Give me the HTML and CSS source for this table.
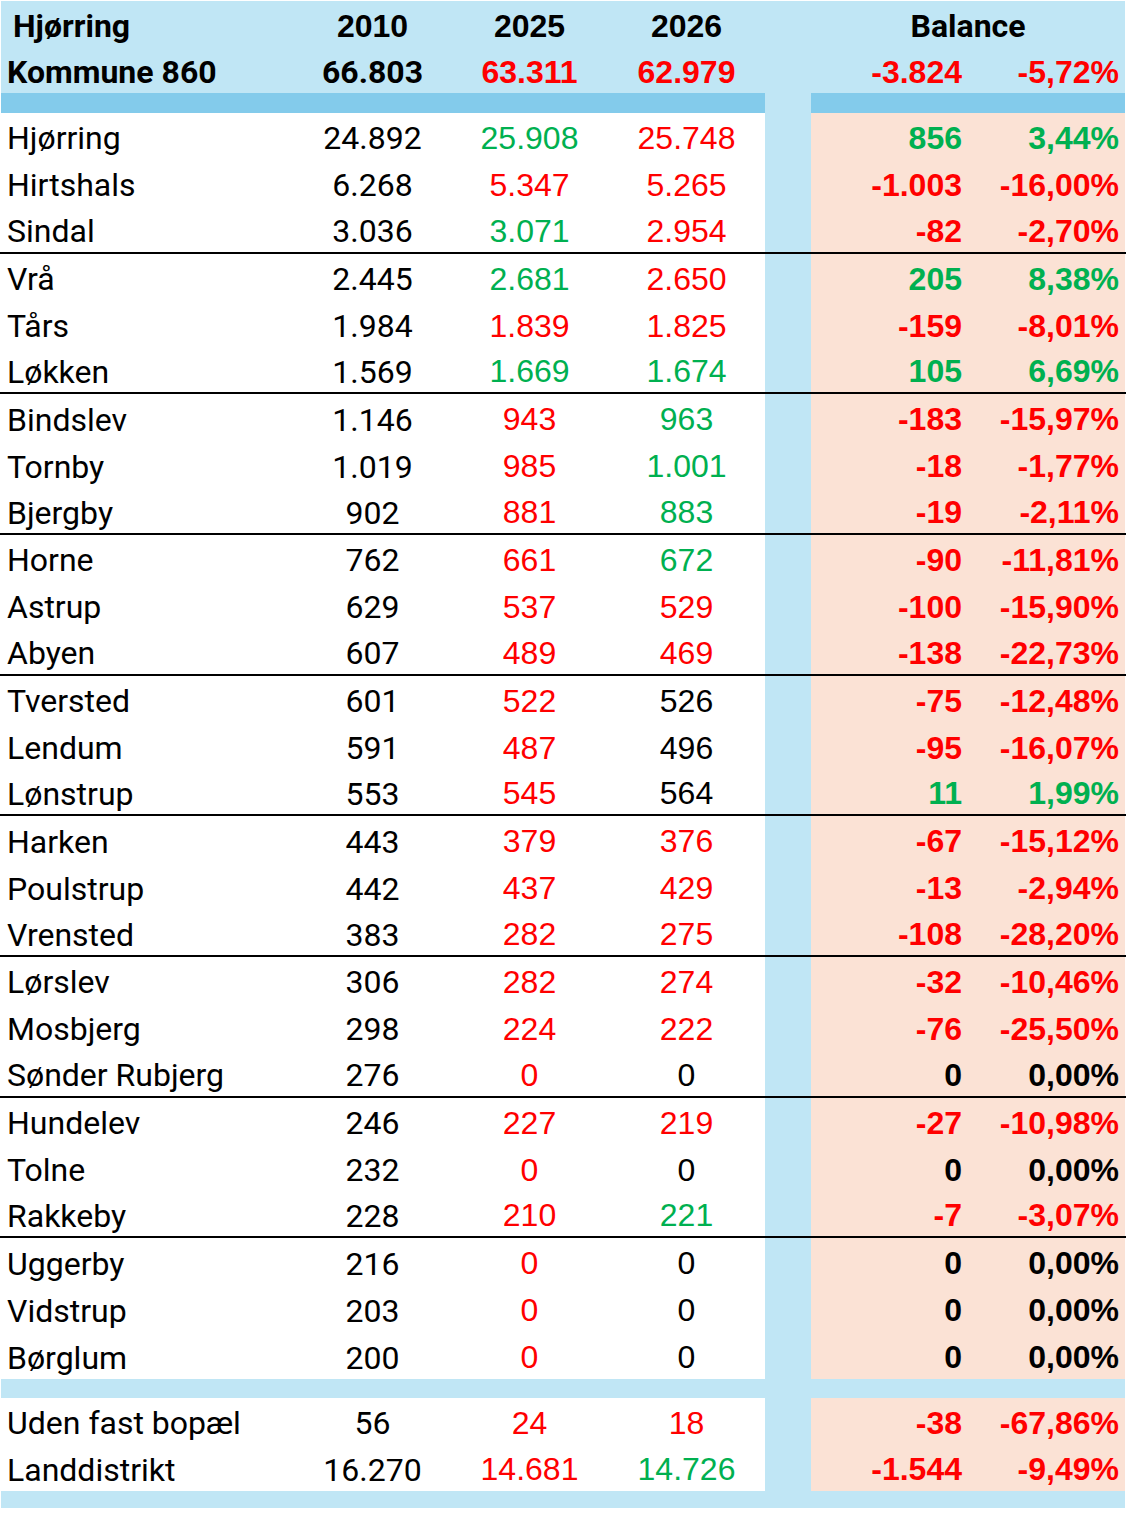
FILE: index.html
```html
<!DOCTYPE html>
<html lang="da">
<head>
<meta charset="utf-8">
<title>Hjørring Kommune 860</title>
<link rel="stylesheet" href="styles.css">
</head>
<body>
<div class="sheet">
  <div class="row head">
    <div class="cell n hb indent">Hjørring</div>
    <div class="cell a ab">2010</div>
    <div class="cell b ab">2025</div>
    <div class="cell c ab">2026</div>
    <div class="cell g"></div>
    <div class="cell bal hb">Balance</div>
  </div>
  <div class="row head">
    <div class="cell n hb">Kommune 860</div>
    <div class="cell a hb">66.803</div>
    <div class="cell b ab r">63.311</div>
    <div class="cell c ab r">62.979</div>
    <div class="cell g"></div>
    <div class="cell d r">-3.824</div>
    <div class="cell p r">-5,72%</div>
  </div>
  <div class="row strip">
    <div class="cell dk"></div><div class="cell dk"></div><div class="cell dk"></div><div class="cell dk"></div>
    <div class="cell g"></div>
    <div class="cell dk"></div><div class="cell dk"></div>
  </div>

  <div class="body">
    <div class="row"><div class="cell n">Hjørring</div><div class="cell a">24.892</div><div class="cell b gr">25.908</div><div class="cell c r">25.748</div><div class="cell g"></div><div class="cell d gr">856</div><div class="cell p gr">3,44%</div></div>
    <div class="row"><div class="cell n">Hirtshals</div><div class="cell a">6.268</div><div class="cell b r">5.347</div><div class="cell c r">5.265</div><div class="cell g"></div><div class="cell d r">-1.003</div><div class="cell p r">-16,00%</div></div>
    <div class="row sep"><div class="cell n">Sindal</div><div class="cell a">3.036</div><div class="cell b gr">3.071</div><div class="cell c r">2.954</div><div class="cell g"></div><div class="cell d r">-82</div><div class="cell p r">-2,70%</div></div>

    <div class="row"><div class="cell n">Vrå</div><div class="cell a">2.445</div><div class="cell b gr">2.681</div><div class="cell c r">2.650</div><div class="cell g"></div><div class="cell d gr">205</div><div class="cell p gr">8,38%</div></div>
    <div class="row"><div class="cell n">Tårs</div><div class="cell a">1.984</div><div class="cell b r">1.839</div><div class="cell c r">1.825</div><div class="cell g"></div><div class="cell d r">-159</div><div class="cell p r">-8,01%</div></div>
    <div class="row sep"><div class="cell n">Løkken</div><div class="cell a">1.569</div><div class="cell b gr">1.669</div><div class="cell c gr">1.674</div><div class="cell g"></div><div class="cell d gr">105</div><div class="cell p gr">6,69%</div></div>

    <div class="row"><div class="cell n">Bindslev</div><div class="cell a">1.146</div><div class="cell b r">943</div><div class="cell c gr">963</div><div class="cell g"></div><div class="cell d r">-183</div><div class="cell p r">-15,97%</div></div>
    <div class="row"><div class="cell n">Tornby</div><div class="cell a">1.019</div><div class="cell b r">985</div><div class="cell c gr">1.001</div><div class="cell g"></div><div class="cell d r">-18</div><div class="cell p r">-1,77%</div></div>
    <div class="row sep"><div class="cell n">Bjergby</div><div class="cell a">902</div><div class="cell b r">881</div><div class="cell c gr">883</div><div class="cell g"></div><div class="cell d r">-19</div><div class="cell p r">-2,11%</div></div>

    <div class="row"><div class="cell n">Horne</div><div class="cell a">762</div><div class="cell b r">661</div><div class="cell c gr">672</div><div class="cell g"></div><div class="cell d r">-90</div><div class="cell p r">-11,81%</div></div>
    <div class="row"><div class="cell n">Astrup</div><div class="cell a">629</div><div class="cell b r">537</div><div class="cell c r">529</div><div class="cell g"></div><div class="cell d r">-100</div><div class="cell p r">-15,90%</div></div>
    <div class="row sep"><div class="cell n">Abyen</div><div class="cell a">607</div><div class="cell b r">489</div><div class="cell c r">469</div><div class="cell g"></div><div class="cell d r">-138</div><div class="cell p r">-22,73%</div></div>

    <div class="row"><div class="cell n">Tversted</div><div class="cell a">601</div><div class="cell b r">522</div><div class="cell c">526</div><div class="cell g"></div><div class="cell d r">-75</div><div class="cell p r">-12,48%</div></div>
    <div class="row"><div class="cell n">Lendum</div><div class="cell a">591</div><div class="cell b r">487</div><div class="cell c">496</div><div class="cell g"></div><div class="cell d r">-95</div><div class="cell p r">-16,07%</div></div>
    <div class="row sep"><div class="cell n">Lønstrup</div><div class="cell a">553</div><div class="cell b r">545</div><div class="cell c">564</div><div class="cell g"></div><div class="cell d gr">11</div><div class="cell p gr">1,99%</div></div>

    <div class="row"><div class="cell n">Harken</div><div class="cell a">443</div><div class="cell b r">379</div><div class="cell c r">376</div><div class="cell g"></div><div class="cell d r">-67</div><div class="cell p r">-15,12%</div></div>
    <div class="row"><div class="cell n">Poulstrup</div><div class="cell a">442</div><div class="cell b r">437</div><div class="cell c r">429</div><div class="cell g"></div><div class="cell d r">-13</div><div class="cell p r">-2,94%</div></div>
    <div class="row sep"><div class="cell n">Vrensted</div><div class="cell a">383</div><div class="cell b r">282</div><div class="cell c r">275</div><div class="cell g"></div><div class="cell d r">-108</div><div class="cell p r">-28,20%</div></div>

    <div class="row"><div class="cell n">Lørslev</div><div class="cell a">306</div><div class="cell b r">282</div><div class="cell c r">274</div><div class="cell g"></div><div class="cell d r">-32</div><div class="cell p r">-10,46%</div></div>
    <div class="row"><div class="cell n">Mosbjerg</div><div class="cell a">298</div><div class="cell b r">224</div><div class="cell c r">222</div><div class="cell g"></div><div class="cell d r">-76</div><div class="cell p r">-25,50%</div></div>
    <div class="row sep"><div class="cell n">Sønder Rubjerg</div><div class="cell a">276</div><div class="cell b r">0</div><div class="cell c">0</div><div class="cell g"></div><div class="cell d">0</div><div class="cell p">0,00%</div></div>

    <div class="row"><div class="cell n">Hundelev</div><div class="cell a">246</div><div class="cell b r">227</div><div class="cell c r">219</div><div class="cell g"></div><div class="cell d r">-27</div><div class="cell p r">-10,98%</div></div>
    <div class="row"><div class="cell n">Tolne</div><div class="cell a">232</div><div class="cell b r">0</div><div class="cell c">0</div><div class="cell g"></div><div class="cell d">0</div><div class="cell p">0,00%</div></div>
    <div class="row sep"><div class="cell n">Rakkeby</div><div class="cell a">228</div><div class="cell b r">210</div><div class="cell c gr">221</div><div class="cell g"></div><div class="cell d r">-7</div><div class="cell p r">-3,07%</div></div>

    <div class="row"><div class="cell n">Uggerby</div><div class="cell a">216</div><div class="cell b r">0</div><div class="cell c">0</div><div class="cell g"></div><div class="cell d">0</div><div class="cell p">0,00%</div></div>
    <div class="row"><div class="cell n">Vidstrup</div><div class="cell a">203</div><div class="cell b r">0</div><div class="cell c">0</div><div class="cell g"></div><div class="cell d">0</div><div class="cell p">0,00%</div></div>
    <div class="row"><div class="cell n">Børglum</div><div class="cell a">200</div><div class="cell b r">0</div><div class="cell c">0</div><div class="cell g"></div><div class="cell d">0</div><div class="cell p">0,00%</div></div>
  </div>

  <div class="band mid"></div>

  <div class="foot">
    <div class="row"><div class="cell n">Uden fast bopæl</div><div class="cell a">56</div><div class="cell b r">24</div><div class="cell c r">18</div><div class="cell g"></div><div class="cell d r">-38</div><div class="cell p r">-67,86%</div></div>
    <div class="row"><div class="cell n">Landdistrikt</div><div class="cell a">16.270</div><div class="cell b r">14.681</div><div class="cell c gr">14.726</div><div class="cell g"></div><div class="cell d r">-1.544</div><div class="cell p r">-9,49%</div></div>
  </div>

  <div class="band end"></div>
</div>
</body>
</html>
```

FILE: styles.css
```css
html, body {
  margin: 0;
  padding: 0;
  background: #ffffff;
}

.sheet {
  padding: 1px 0 0 1px;
  width: 1124px;
  font-size: 32px;
  color: #000000;
}

.row {
  display: grid;
  grid-template-columns: 293px 157px 157px 157px 46px 157px 157px;
  height: 46.9px;
  box-sizing: border-box;
}

.head {
  height: 46px;
  background: #c0e6f5;
}

.strip {
  height: 20px;
}

.cell {
  display: flex;
  align-items: center;
  padding-top: 4px;
  box-sizing: border-box;
  white-space: nowrap;
  min-width: 0;
}

.body .cell,
.foot .cell {
  background: #ffffff;
}

.body .cell.d,
.body .cell.p,
.foot .cell.d,
.foot .cell.p {
  background: #fbe2d5;
}

.cell.g,
.body .cell.g,
.foot .cell.g {
  background: #c0e6f5;
}

.cell.dk {
  background: #83cbeb;
}

.strip .cell {
  padding: 0;
}

.sep {
  border-bottom: 2px solid #000000;
  margin-left: -1px;
  padding-left: 1px;
  width: 1126px;
  grid-template-columns: 293px 157px 157px 157px 46px 157px 157px 1px;
}

/* name column (Aptos substitute) */
.n {
  font-family: Roboto, "Liberation Sans", sans-serif;
  padding-left: 6px;
}

.indent {
  padding-left: 12px;
}

/* 2010 column */
.a {
  font-family: Roboto, "Liberation Sans", sans-serif;
  justify-content: center;
}

/* 2025 / 2026 columns */
.b, .c {
  font-family: "Liberation Sans", Arial, sans-serif;
  justify-content: center;
}

/* balance columns */
.d, .p {
  font-family: "Liberation Sans", Arial, sans-serif;
  font-weight: 700;
  justify-content: flex-end;
  padding-right: 6px;
}

.bal {
  grid-column: 6 / span 2;
  justify-content: center;
}

.hb {
  font-family: Roboto, "Liberation Sans", sans-serif;
  font-weight: 700;
}

.ab {
  font-family: "Liberation Sans", Arial, sans-serif;
  font-weight: 700;
}

.r {
  color: #ff0000;
}

.gr {
  color: #00b050;
}

.band {
  background: #c0e6f5;
}

.band.mid {
  height: 19px;
}

.band.end {
  height: 17px;
}

.foot .row {
  height: 46.5px;
}
```
